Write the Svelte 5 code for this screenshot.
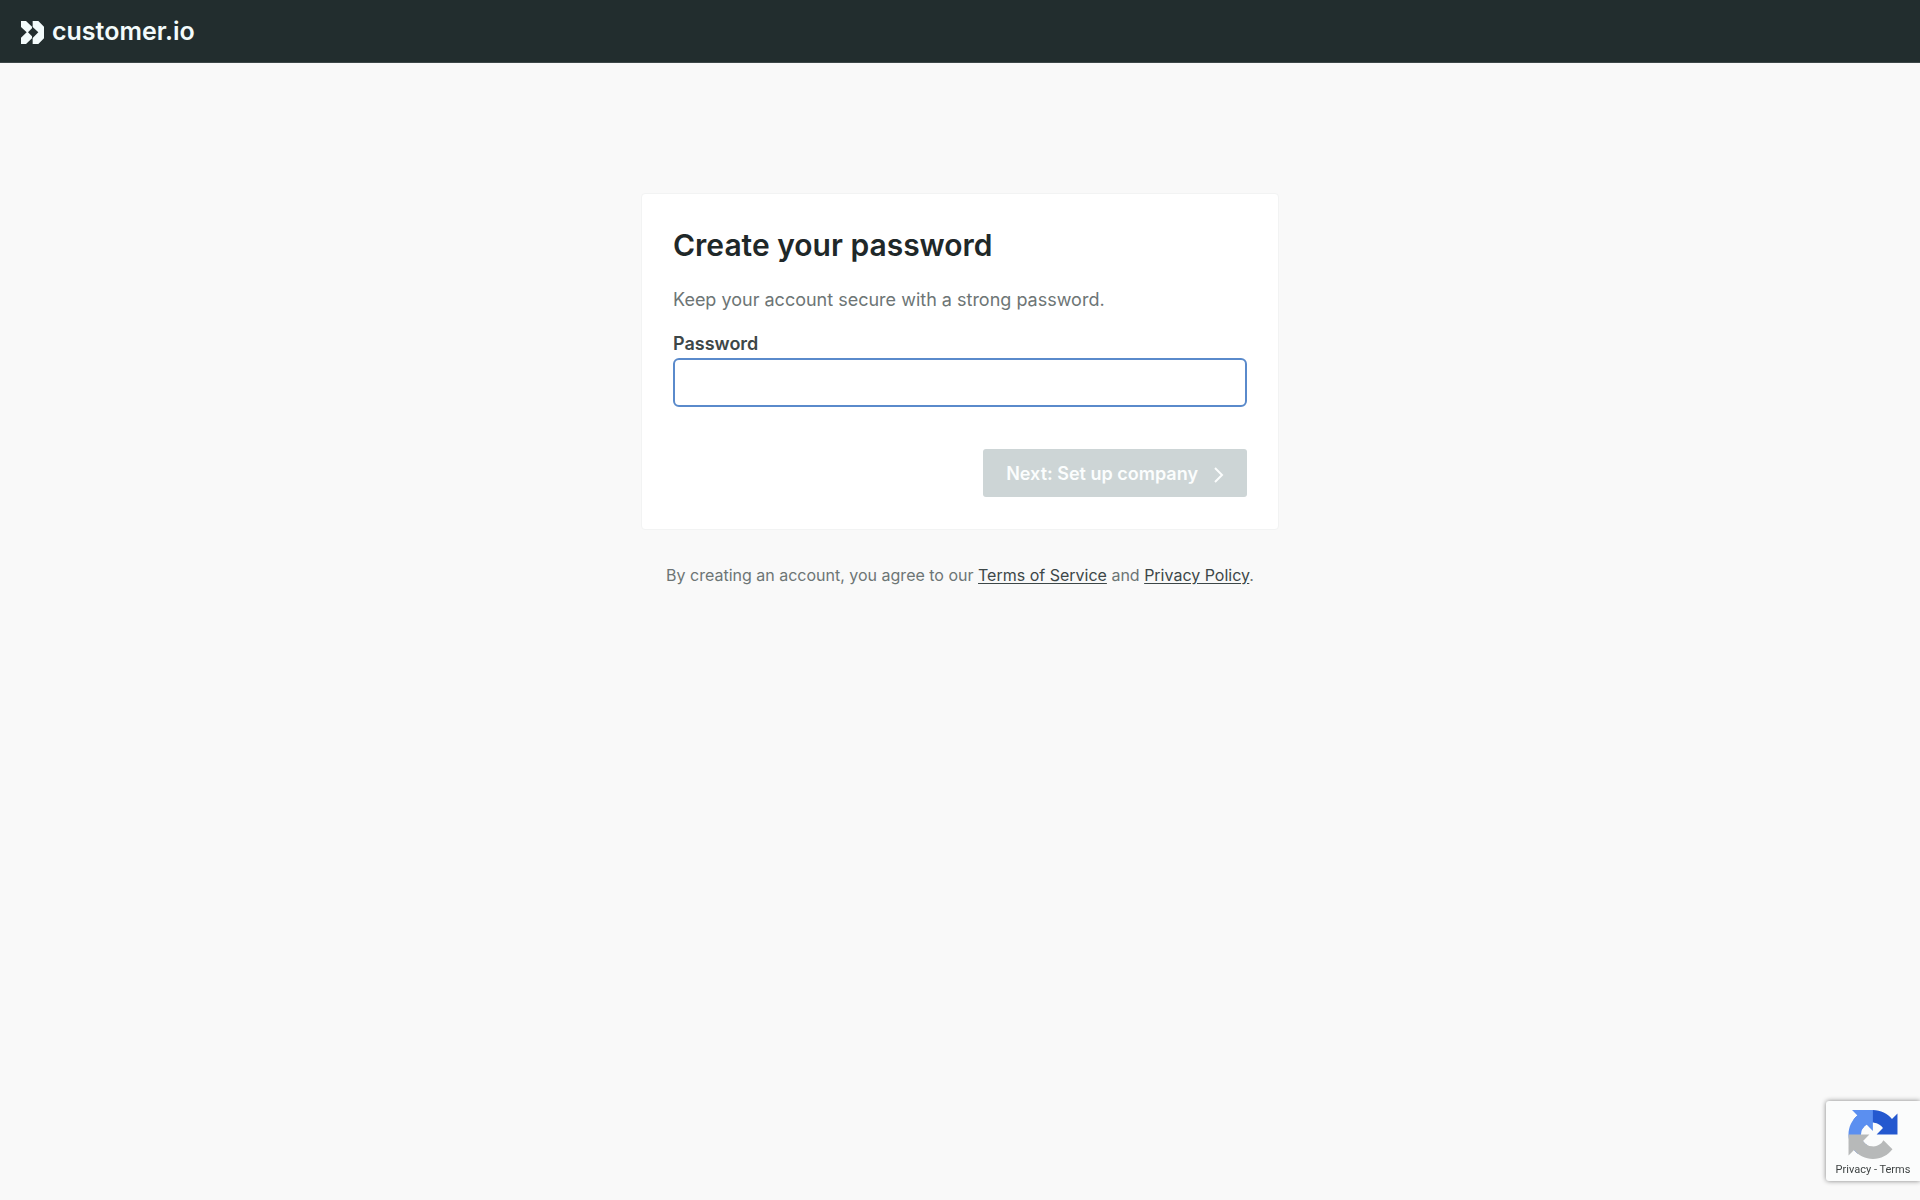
<script>
  let password = $state('');
</script>

<svelte:head><title>Create your password</title></svelte:head>

<div class="page">
  <header>
    <a class="brand" href="/">
      <svg class="mark" viewBox="0 0 69 69" aria-hidden="true">
        <path d="M0 0H15L33 17V22L21 34L33 46V52L15 69H0V50L17 34L0 18Z" />
        <path d="M35 0H52L69 17V52L52 69H35V51L52 34L35 18Z" />
      </svg>
      <span>customer.io</span>
    </a>
  </header>

  <main>
    <form class="card" onsubmit={(e) => e.preventDefault()}>
      <h1>Create your password</h1>
      <p class="intro">Keep your account secure with a strong password.</p>
      <label for="password">Password</label>
      <input id="password" type="password" bind:value={password} />
      <button type="submit" disabled={!password}>
        Next: Set up company
        <svg viewBox="0 0 10 16" aria-hidden="true"><path d="M1 1L8 8L1 15" /></svg>
      </button>
    </form>
    <p class="legal">
      By creating an account, you agree to our <a href="/terms">Terms of Service</a> and
      <a href="/privacy">Privacy Policy</a>.
    </p>
  </main>

  <aside class="captcha">
    <svg viewBox="0 0 64 64" aria-hidden="true">
      <path fill="#2458cf" d="M64 31.955l-.033-1.37V4.687l-7.16 7.16C50.948 4.674 42.033.093 32.05.093c-10.4 0-19.622 4.96-25.458 12.64l11.736 11.86a15.55 15.55 0 0 1 4.754-5.334c2.05-1.6 4.952-2.906 8.968-2.906.485 0 .86.057 1.135.163 4.976.393 9.288 3.14 11.828 7.124l-8.307 8.307L64 31.953" />
      <path fill="#5b8ff0" d="M31.862.094l-1.37.033H4.594l7.16 7.16C4.58 13.147 0 22.06 0 32.046c0 10.4 4.96 19.622 12.64 25.458L24.5 45.768a15.55 15.55 0 0 1-5.334-4.754c-1.6-2.05-2.906-4.952-2.906-8.968 0-.485.057-.86.163-1.135.393-4.976 3.14-9.288 7.124-11.828l8.307 8.307L31.86.095" />
      <path fill="#b7b9b9" d="M.001 32.045l.033 1.37v25.898l7.16-7.16c5.86 7.173 14.774 11.754 24.76 11.754 10.4 0 19.622-4.96 25.458-12.64l-11.736-11.86a15.55 15.55 0 0 1-4.754 5.334c-2.05 1.6-4.952 2.906-8.968 2.906-.485 0-.86-.057-1.135-.163-4.976-.393-9.288-3.14-11.828-7.124l8.307-8.307c-10.522.04-22.4.066-27.295-.005" />
    </svg>
    <div><a href="/captcha-privacy">Privacy</a> - <a href="/captcha-terms">Terms</a></div>
  </aside>
</div>

<style>
  :global(body) {
    background: #f9f9f9;
  }
  .page {
    min-height: 100vh;
    font-family: Inter, sans-serif;
    color: #6d7575;
  }
  header {
    display: flex;
    align-items: center;
    box-sizing: border-box;
    height: 63px;
    padding: 3px 21px 0;
    background: #222d2e;
    border-bottom: 1px solid #3d4748;
  }
  .brand {
    display: flex;
    align-items: center;
    gap: 8px;
    color: #f3fbfb;
    font-size: 25px;
    line-height: 32px;
    font-weight: 600;
    text-decoration: none;
  }
  .brand span {
    margin-top: -4px;
  }
  .mark {
    width: 23px;
    height: 23px;
    fill: currentColor;
  }
  main {
    display: flex;
    flex-direction: column;
    align-items: center;
    padding: 130px 16px 32px;
  }
  .card {
    display: flex;
    flex-direction: column;
    box-sizing: border-box;
    width: 100%;
    max-width: 638px;
    padding: 31px 31px 32px;
    background: #fff;
    border: 1px solid #f2f3f3;
    border-radius: 4px;
  }
  h1 {
    margin: 0 0 21px;
    color: #1f2829;
    font-size: 30px;
    line-height: 40px;
    font-weight: 600;
  }
  .intro {
    margin: 0 0 16px;
    font-size: 18px;
    line-height: 28px;
  }
  label {
    color: #3d4748;
    font-size: 18px;
    line-height: 28px;
    font-weight: 600;
  }
  input {
    box-sizing: border-box;
    width: 100%;
    height: 49px;
    padding: 0 12px;
    font: inherit;
    font-size: 18px;
    background: #fff;
    border: 2px solid #5a8acb;
    border-radius: 6px;
    outline: none;
  }
  button {
    display: flex;
    align-items: center;
    align-self: flex-end;
    gap: 16px;
    height: 48px;
    margin-top: 42px;
    padding: 0 23px;
    color: #fbfdfd;
    font: inherit;
    font-size: 18px;
    font-weight: 600;
    background: #cdd5d6;
    border: 0;
    border-radius: 3px;
  }
  button svg {
    width: 10px;
    height: 16px;
    margin-top: 3px;
    fill: none;
    stroke: currentColor;
    stroke-width: 2;
  }
  .legal {
    margin: 33px 0 0;
    font-size: 16px;
    line-height: 24px;
    text-align: center;
  }
  .legal a {
    color: #3d4748;
    text-underline-offset: 2px;
  }
  .captcha {
    position: fixed;
    right: 0;
    bottom: 19px;
    display: flex;
    flex-direction: column;
    align-items: center;
    box-sizing: border-box;
    width: 94px;
    height: 80px;
    padding-top: 9px;
    background: #fbfcfc;
    border-radius: 3px 0 0 3px;
    box-shadow: 0 0 5px #808080;
    color: #3f4444;
    font-family: Roboto, sans-serif;
    font-size: 11px;
    line-height: 22px;
  }
  .captcha svg {
    width: 50px;
    height: 50px;
  }
  .captcha a {
    color: inherit;
    text-decoration: none;
  }
</style>
